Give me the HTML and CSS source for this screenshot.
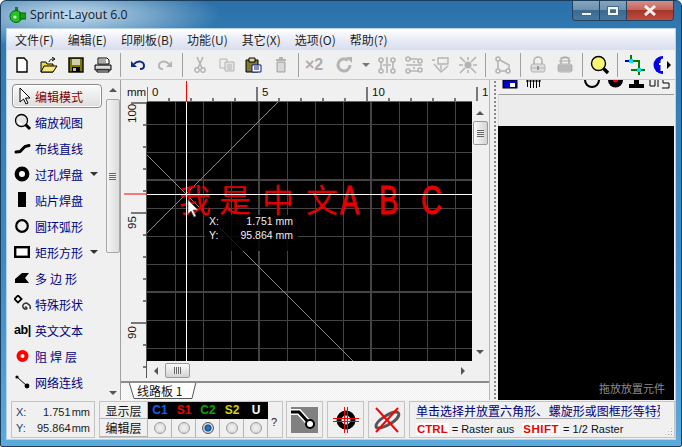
FILE: index.html
```html
<!DOCTYPE html>
<html lang="zh-CN">
<head>
    <meta charset="UTF-8">
    <title>Sprint-Layout 6.0</title>
    <link rel="stylesheet" href="styles.css">
</head>
<body>
<div class="window">
    <div class="titlebar">
        <svg class="app-icon" width="17" height="16" viewBox="0 0 17 16">
            <rect x="6" y="0" width="3" height="5" fill="#1c7a1c"/>
            <circle cx="7" cy="9.500" r="6" fill="#22c422" stroke="#0b5c0b"/>
            <rect x="11" y="6" width="6" height="6" fill="#17a017" stroke="#0b5c0b"/>
            <circle cx="6" cy="10" r="1.600" fill="#d8f8d8"/>
        </svg>
        <span class="title-text">Sprint-Layout 6.0</span>
        <div class="win-btns">
            <div class="win-btn"><span class="min-glyph"></span></div>
            <div class="win-btn win-max"><span class="max-glyph"></span></div>
            <div class="win-btn win-close">
                <svg width="14" height="11" viewBox="0 0 14 11"><path d="M2 1l10 9M12 1L2 10" stroke="#f4f0ee" stroke-width="3"/></svg>
            </div>
        </div>
    </div>

    <div class="client">
        <div class="menubar">
            <span>文件(F)</span><span>编辑(E)</span><span>印刷板(B)</span><span>功能(U)</span><span>其它(X)</span><span>选项(O)</span><span>帮助(?)</span>
        </div>

        <div class="toolbar">
            <div class="tb"><svg width="16" height="18" viewBox="0 0 16 18"><path d="M3 2h7l3 3v11H3z" fill="#fff" stroke="#000" stroke-width="1.400"/></svg></div>
            <div class="tb"><svg width="18" height="16" viewBox="0 0 18 16"><path d="M1 15V5h5l1 2h6v8z" fill="#e8d84c" stroke="#000"/><path d="M1 15l3-6h13l-4 6z" fill="#f4e878" stroke="#000"/><path d="M9 5c1-3 3-3 5-3M12 0l3 2-3 2" fill="none" stroke="#000"/></svg></div>
            <div class="tb"><svg width="16" height="16" viewBox="0 0 16 16"><rect x="1" y="1" width="14" height="14" fill="#7a7a00" stroke="#000" stroke-width="1.400"/><rect x="4" y="2" width="8" height="6" fill="#d0d0b0"/><rect x="4" y="10" width="8" height="5" fill="#000"/><rect x="5" y="11" width="3" height="3" fill="#bbb"/></svg></div>
            <div class="tb"><svg width="18" height="16" viewBox="0 0 18 16"><path d="M4 7V1h9l2 2v4z" fill="#fff" stroke="#000"/><path d="M5 3h7M5 5h7" stroke="#555"/><path d="M1 8h16v5H1z" fill="#bbb" stroke="#000"/><path d="M3 13h12v2H3z" fill="#eee" stroke="#000"/><path d="M2 10h14" stroke="#fff"/></svg></div>
            <div class="tb-sep"></div>
            <div class="tb"><svg width="16" height="12" viewBox="0 0 16 12"><path d="M4 5c4-4 10-3 10 2 0 2-2 3-4 3" fill="none" stroke="#0a2a8a" stroke-width="2"/><path d="M1 2v6h6z" fill="#0a2a8a"/></svg></div>
            <div class="tb"><svg width="16" height="12" viewBox="0 0 16 12"><path d="M12 5C8 1 2 2 2 7c0 2 2 3 4 3" fill="none" stroke="#b4b4b4" stroke-width="2"/><path d="M15 2v6H9z" fill="#b4b4b4"/></svg></div>
            <div class="tb-sep"></div>
            <div class="tb"><svg width="12" height="18" viewBox="0 0 12 18"><path d="M3 1l5 11M9 1L4 12" stroke="#b4b4b4" stroke-width="1.600"/><circle cx="3" cy="14" r="2.200" fill="none" stroke="#b4b4b4" stroke-width="1.400"/><circle cx="9" cy="14" r="2.200" fill="none" stroke="#b4b4b4" stroke-width="1.400"/></svg></div>
            <div class="tb"><svg width="16" height="14" viewBox="0 0 16 14"><path d="M1 1h7v9H1z" fill="#eee" stroke="#b4b4b4"/><path d="M6 4h9v9H6z" fill="#e4e4e4" stroke="#b4b4b4"/><path d="M8 7h5M8 9h5M8 11h5" stroke="#b4b4b4"/></svg></div>
            <div class="tb"><svg width="17" height="16" viewBox="0 0 17 16"><path d="M1 3h12v12H1z" fill="#807830" stroke="#000"/><path d="M4 1h6v4H4z" fill="#d8d8a0" stroke="#000"/><path d="M7 8h9v7H7z" fill="#fff" stroke="#0a1a8a"/><path d="M9 10h5M9 12h5" stroke="#0a1a8a"/></svg></div>
            <div class="tb"><svg width="12" height="16" viewBox="0 0 12 16"><path d="M1 3h10M4 1h4" stroke="#b4b4b4" stroke-width="2"/><path d="M2 5h8v10H2z" fill="#c4c4c4" stroke="#a8a8a8"/><path d="M4 6v8M6 6v8M8 6v8" stroke="#eee"/></svg></div>
            <div class="tb-sep"></div>
            <div class="tb tb-x2">×2</div>
            <div class="tb-rotate">
                <svg width="18" height="18" viewBox="0 0 18 18"><path d="M15 9a6 6 0 1 1-2-4.500" fill="none" stroke="#b4b4b4" stroke-width="3"/><path d="M11 1h6v6z" fill="#b4b4b4"/></svg>
                <span class="drop-gray"></span>
            </div>
            <div class="tb"><svg width="18" height="18" viewBox="0 0 18 18"><g fill="none" stroke="#b4b4b4" stroke-width="1.600"><circle cx="3" cy="4" r="2"/><circle cx="3" cy="15" r="2"/><circle cx="15" cy="4" r="2"/><circle cx="15" cy="15" r="2"/><path d="M3 6v7M15 6v7M9 1v16"/><path d="M5 9h3M10 9h3"/></g></svg></div>
            <div class="tb"><svg width="18" height="18" viewBox="0 0 18 18"><g fill="none" stroke="#b4b4b4" stroke-width="1.600"><circle cx="3" cy="3" r="2"/><circle cx="15" cy="5" r="2"/><circle cx="3" cy="15" r="2"/><circle cx="15" cy="14" r="2"/><path d="M5 3h8M5 15h8M1 9h16M9 5v2M9 11v2"/></g></svg></div>
            <div class="tb"><svg width="20" height="18" viewBox="0 0 20 18"><g fill="none" stroke="#b4b4b4" stroke-width="1.400"><path d="M7 2h10v6H7zM1 4h3M3 8l7 8 7-6"/><path d="M10 9v5"/></g></svg></div>
            <div class="tb"><svg width="20" height="18" viewBox="0 0 20 18"><circle cx="10" cy="9" r="3.500" fill="#b4b4b4"/><path d="M2 1l5 5M18 1l-5 5M2 17l5-5M18 17l-5-5M1 9h4M15 9h4M10 1v3M10 14v3" stroke="#b4b4b4" stroke-width="1.600"/></svg></div>
            <div class="tb-sep"></div>
            <div class="tb"><svg width="16" height="18" viewBox="0 0 16 18"><g fill="none" stroke="#b4b4b4" stroke-width="1.600"><circle cx="3" cy="3" r="2"/><circle cx="3" cy="15" r="2"/><circle cx="13" cy="15" r="2"/><path d="M5 4l9 5v4M5 15h6M3 5v8"/></g></svg></div>
            <div class="tb-sep"></div>
            <div class="tb"><svg width="16" height="18" viewBox="0 0 16 18"><path d="M4 8V5a4 4 0 0 1 8 0v3" fill="none" stroke="#b4b4b4" stroke-width="1.600"/><rect x="1" y="8" width="14" height="8" rx="2" fill="#ddd" stroke="#b4b4b4"/><path d="M1 12h14" stroke="#b4b4b4"/><path d="M8 10v4" stroke="#999" stroke-width="2"/></svg></div>
            <div class="tb"><svg width="16" height="18" viewBox="0 0 16 18"><path d="M4 8V5a4 4 0 0 1 8 0v3" fill="none" stroke="#b4b4b4" stroke-width="1.600"/><rect x="1" y="8" width="14" height="8" rx="2" fill="#ccc" stroke="#b4b4b4"/><path d="M1 10h14M1 12h14M1 14h14M3 2h10M2 5h12" stroke="#a8a8a8"/></svg></div>
            <div class="tb-sep"></div>
            <div class="tb"><svg width="20" height="20" viewBox="0 0 20 20"><path d="M12 12l6 6" stroke="#000" stroke-width="3.400"/><circle cx="8.500" cy="8.500" r="7" fill="#f8f870" stroke="#000" stroke-width="1.400"/></svg></div>
            <div class="tb-sep"></div>
            <div class="tb"><svg width="20" height="20" viewBox="0 0 20 20"><path d="M6 0V6H14V20M6 15H20" fill="none" stroke="#008000" stroke-width="2"/><path d="M0 6H6" stroke="#0000c0" stroke-width="2"/><rect x="4" y="4" width="4" height="4" fill="#00e0f0"/><rect x="12" y="13" width="4" height="4" fill="#00e0f0"/></svg></div>
            <div class="tb tb-clip"><svg width="20" height="18" viewBox="0 0 20 18"><circle cx="9.500" cy="9" r="9" fill="#0000f0"/><path d="M6 7h1.500V5c0-2 2-3 4-2.500v2H10v2.500h1.500v2H10v6H7.500v-6H6z" fill="#fff"/></svg></div>
            <div class="tb-more"><span class="more-arrow"></span></div>
        </div>

        <div class="main">
            <div class="tools">
                <div class="tool tool-active">
                    <svg class="tool-ic" width="18" height="18" viewBox="0 0 18 18"><path d="M6 1v14l3.500-3 2.500 5 2-1-2.500-5H16z" fill="#fff" stroke="#000"/></svg>
                    <span class="tool-red">编辑模式</span>
                </div>
                <div class="tool">
                    <svg class="tool-ic" width="18" height="18" viewBox="0 0 18 18"><path d="M11 11l5 5" stroke="#000" stroke-width="3"/><circle cx="7.500" cy="7.500" r="6" fill="#e4e4e4" stroke="#000" stroke-width="1.300"/><path d="M4 8a4 4 0 0 0 4 3" fill="none" stroke="#fff" stroke-width="2"/></svg>
                    <span>缩放视图</span>
                </div>
                <div class="tool">
                    <svg class="tool-ic" width="18" height="18" viewBox="0 0 18 18"><path d="M2 13l4-.5 5-5 4-1" fill="none" stroke="#000" stroke-width="3" stroke-linecap="round"/></svg>
                    <span>布线直线</span>
                </div>
                <div class="tool">
                    <svg class="tool-ic" width="18" height="18" viewBox="0 0 18 18"><circle cx="8" cy="9" r="5.200" fill="#fff" stroke="#000" stroke-width="4.400"/></svg>
                    <span>过孔焊盘</span><span class="drop"></span>
                </div>
                <div class="tool">
                    <svg class="tool-ic" width="18" height="18" viewBox="0 0 18 18"><rect x="4" y="1" width="8" height="15" fill="#000"/></svg>
                    <span>贴片焊盘</span>
                </div>
                <div class="tool">
                    <svg class="tool-ic" width="18" height="18" viewBox="0 0 18 18"><circle cx="8" cy="9" r="5.800" fill="none" stroke="#000" stroke-width="2.200"/></svg>
                    <span>圆环弧形</span>
                </div>
                <div class="tool">
                    <svg class="tool-ic" width="18" height="18" viewBox="0 0 18 18"><rect x="1.200" y="4.200" width="13.600" height="9.600" fill="#fff" stroke="#000" stroke-width="2.400"/></svg>
                    <span>矩形方形</span><span class="drop"></span>
                </div>
                <div class="tool">
                    <svg class="tool-ic" width="18" height="18" viewBox="0 0 18 18"><path d="M1 14V10L8 4H15L11 9L15 14Z" fill="#000"/></svg>
                    <span class="spaced">多边形</span>
                </div>
                <div class="tool">
                    <svg class="tool-ic" width="18" height="18" viewBox="0 0 18 18"><rect x="1.500" y="1.500" width="5" height="5" transform="rotate(45 4 4)" fill="#fff" stroke="#000" stroke-width="1.800"/><path d="M11 12.500a1 1 0 1 1 1.500 1.500 3 3 0 1 1 1.500-5 4 4 0 0 1 2 5" fill="none" stroke="#333" stroke-width="1.500"/></svg>
                    <span>特殊形状</span>
                </div>
                <div class="tool">
                    <span class="tool-ab">ab|</span>
                    <span>英文文本</span>
                </div>
                <div class="tool">
                    <svg class="tool-ic" width="18" height="18" viewBox="0 0 18 18"><circle cx="8.500" cy="9" r="4" fill="#fff" stroke="#f00" stroke-width="4"/></svg>
                    <span class="spaced">阻焊层</span>
                </div>
                <div class="tool">
                    <svg class="tool-ic" width="18" height="18" viewBox="0 0 18 18"><path d="M3 4l10 9" stroke="#000"/><circle cx="3" cy="4" r="1.600" fill="#000"/><circle cx="13" cy="13" r="2.400" fill="#000"/></svg>
                    <span>网络连线</span>
                </div>
            </div>

            <div class="tools-scroll">
                <span class="arr-up"></span>
                <div class="tools-thumb"><span class="grip"></span></div>
                <span class="arr-down"></span>
            </div>

            <div class="board">
                <div class="board-row">
                    <svg class="ruler-left" width="26" height="298" viewBox="121 80 26 298">
                        <text x="127" y="96" class="rt">mm</text>
                        <path d="M131 103H147M131 213H147M131 323H147M143 125H147M143 147H147M143 169H147M143 191H147M143 235H147M143 257H147M143 279H147M143 301H147M143 345H147M143 367H147" stroke="#000"/>
                        <path d="M146.500 102V378" stroke="#555"/>
                        <path d="M124 194H147" stroke="#f00"/>
                        <text class="rt" transform="translate(136 123) rotate(-90)">100</text>
                        <text class="rt" transform="translate(136 229) rotate(-90)">95</text>
                        <text class="rt" transform="translate(136 339) rotate(-90)">90</text>
                    </svg>
                    <div class="board-right">
                        <svg class="ruler-top" width="341" height="22" viewBox="147 80 341 22">
                            <path d="M147 87V101M257 87V101M367 87V101M477 87V101M169 98V101M191 98V101M213 98V101M235 98V101M279 98V101M301 98V101M323 98V101M345 98V101M389 98V101M411 98V101M433 98V101M455 98V101" stroke="#000"/>
                            <path d="M186.500 81V101" stroke="#f00"/>
                            <path d="M147 101.500H472" stroke="#666"/>
                            <text x="152" y="96" class="rt">0</text>
                            <text x="262" y="96" class="rt">5</text>
                            <text x="372" y="96" class="rt">10</text>
                            <text x="482" y="96" class="rt">1</text>
                        </svg>
                        <div class="view-row">
                            <svg class="canvas" width="325" height="259" viewBox="147 102 325 259">
                                <rect x="147" y="102" width="325" height="259" fill="#000"/>
                                <path d="M175.500 102V361M203.500 102V361M231.500 102V361M287.500 102V361M315.500 102V361M343.500 102V361M399.500 102V361M427.500 102V361M455.500 102V361M147 124.500H472M147 152.500H472M147 208.500H472M147 236.500H472M147 264.500H472M147 320.500H472M147 348.500H472" stroke="#444"/>
                                <path d="M259 102V361M371 102V361M147 180H472M147 292H472" stroke="#444" stroke-width="2"/>
                                <path d="M147 233L278 102M147 155L353 361" stroke="#8a8a8a" fill="none"/>
                                <rect x="205" y="215" width="93" height="36" fill="#000" opacity=".82"/>
                                <g class="red-text">
                                    <text x="179" y="212">我</text>
                                    <text x="219" y="212">是</text>
                                    <text x="262" y="212">中</text>
                                    <text x="306" y="212">文</text>
                                </g>
                                <g class="red-latin">
                                    <text transform="translate(340 214) scale(.72 1)">A</text>
                                    <text transform="translate(379 214) scale(.72 1)">B</text>
                                    <text transform="translate(421 214) scale(.72 1)">C</text>
                                </g>
                                <path d="M186.500 102V361M147 194.500H472" stroke="#fff"/>
                                <g class="tip">
                                    <text x="209" y="225">X:</text>
                                    <text x="293" y="225" text-anchor="end">1.751 mm</text>
                                    <text x="209" y="239">Y:</text>
                                    <text x="293" y="239" text-anchor="end">95.864 mm</text>
                                </g>
                                <path d="M188 200v14l3-3 3 6 2-1-3-6h5z" fill="#fff" stroke="#555" stroke-width=".6"/>
                            </svg>
                            <div class="vbar">
                                <span class="arr-up"></span>
                                <div class="vthumb"><span class="grip"></span></div>
                                <span class="arr-down"></span>
                            </div>
                        </div>
                        <div class="hbar">
                            <span class="arr-left"></span>
                            <div class="hthumb"><span class="vgrip"></span></div>
                            <span class="arr-right"></span>
                        </div>
                    </div>
                </div>
                <div class="tabs">
                    <div class="tab">
                        <svg class="tab-shape" width="68" height="16" viewBox="0 0 68 16"><path d="M0 -1L5 15.500H63L67 -1Z" fill="#fff" stroke="#555"/></svg>
                        <span class="tab-label">线路板 1</span>
                    </div>
                </div>
            </div>

            <div class="splitter"></div>

            <div class="parts">
                <div class="parts-icons">
                    <svg width="176" height="14" viewBox="498 80 176 14">
                        <rect x="503" y="80" width="14" height="8" fill="#0000d0" stroke="#000"/>
                        <rect x="510" y="83" width="5" height="4" fill="#fff"/>
                        <path d="M527.500 80v7M530.500 80v8M533.500 80v8M536.500 80v8M539.500 80v7M526 81h15" stroke="#000"/>
                        <path d="M585 80a7 7 0 0 0 14 0" fill="none" stroke="#000" stroke-width="2"/>
                        <path d="M608 80a7.500 7.500 0 0 0 15 0z" fill="#000"/>
                        <circle cx="615.500" cy="80" r="2.500" fill="#f00"/>
                        <path d="M634 80h5v4h5v4h-15v-4h5z" fill="#000"/>
                        <path d="M650 80v6h5v-6M658 80v7M663 80v3h6v5h-7" fill="none" stroke="#000"/>
                    </svg>
                </div>
                <div class="parts-head"></div>
                <div class="parts-list">
                    <span class="parts-hint">拖放放置元件</span>
                </div>
            </div>
        </div>

        <div class="status">
            <div class="coords">
                <div class="coord-row"><span class="coord-key">X:</span><span class="coord-val">1.751 mm</span></div>
                <div class="coord-row"><span class="coord-key">Y:</span><span class="coord-val">95.864 mm</span></div>
            </div>
            <div class="layers">
                <div class="layer-name">显示层</div>
                <div class="layer-code c1">C1</div>
                <div class="layer-code s1">S1</div>
                <div class="layer-code c2">C2</div>
                <div class="layer-code s2">S2</div>
                <div class="layer-code u">U</div>
                <div class="layer-help">?</div>
                <div class="layer-name">编辑层</div>
                <div class="layer-radio"><span class="radio"></span></div>
                <div class="layer-radio"><span class="radio"></span></div>
                <div class="layer-radio"><span class="radio radio-on"></span></div>
                <div class="layer-radio"><span class="radio"></span></div>
                <div class="layer-radio"><span class="radio"></span></div>
            </div>
            <div class="sbtn">
                <svg width="27" height="26" viewBox="0 0 27 26"><rect width="27" height="26" fill="#808080"/><path d="M0 5h8l9 10" fill="none" stroke="#fff" stroke-width="6"/><path d="M0 5h8l9 10" fill="none" stroke="#000" stroke-width="3"/><circle cx="19" cy="17" r="4" fill="#fff" stroke="#000" stroke-width="2"/></svg>
            </div>
            <div class="sbtn">
                <svg width="28" height="28" viewBox="0 0 28 28"><circle cx="14" cy="14" r="7" fill="none" stroke="#000" stroke-width="5"/><path d="M1 12.500h26M1 15.500h26M12.500 1v26M15.500 1v26" stroke="#f00"/></svg>
            </div>
            <div class="sbtn">
                <svg width="30" height="28" viewBox="0 0 30 28"><path d="M4 20c0-5 14-14 20-14 5 0 3 6-3 10-6 4-17 9-17 4z" fill="none" stroke="#555" stroke-width="3"/><path d="M4 2l22 24M26 2L4 26" stroke="#f00" stroke-width="2"/></svg>
            </div>
            <div class="hint">
                <div class="hint-top">单击选择并放置六角形、&#8202;螺旋形或图框形等特殊</div>
                <div class="hint-keys">
                    <span class="key">CTRL</span><span class="key-text">= Raster aus</span>
                    <span class="key key-shift">SHIFT</span><span class="key-text">= 1/2 Raster</span>
                </div>
                <span class="size-grip"></span>
            </div>
        </div>
    </div>
</div>
</body>
</html>
```

FILE: styles.css
```css
* {
    box-sizing: border-box;
}
body {
    margin: 0;
    background: #fff;
    font-family: "Noto Sans CJK SC", "Liberation Sans", sans-serif;
    font-size: 12px;
    overflow: hidden;
}
svg {
    display: block;
    flex: none;
}
.window {
    width: 682px;
    height: 447px;
    border: 1px solid #1b3d5c;
    border-radius: 6px 6px 2px 2px;
    background:
        radial-gradient(ellipse 150px 34px at 70px 14px, rgba(225, 238, 246, .85), rgba(225, 238, 246, 0) 100%),
        linear-gradient(180deg, #2b70a8 0, #3079b1 30px, #3d8cc6 60%, #5ca9dc 100%);
    padding: 0 6px 7px 6px;
    display: flex;
    flex-direction: column;
}
.titlebar {
    height: 28px;
    display: flex;
    align-items: center;
    position: relative;
}
.app-icon {
    margin-left: 2px;
}
.title-text {
    font-family: "Open Sans", sans-serif;
    font-size: 12.300px;
    color: #10202c;
    margin-left: 4px;
    margin-top: -1px;
}
.win-btns {
    position: absolute;
    top: 0;
    right: 1px;
    display: flex;
    height: 20px;
    border: 1px solid #24425f;
    border-top: none;
    border-radius: 0 0 4px 4px;
    overflow: hidden;
}
.win-btn {
    width: 27px;
    height: 19px;
    background: linear-gradient(180deg, #86a5bd 0, #6c93b0 45%, #3c6a8f 50%, #47789e 100%);
    border-right: 1px solid #24425f;
    display: flex;
    align-items: center;
    justify-content: center;
}
.win-close {
    width: 46px;
    border-right: none;
    background: linear-gradient(180deg, #d48f86 0, #c4655a 45%, #a8352a 50%, #bd4c3e 100%);
}
.min-glyph {
    width: 11px;
    height: 4px;
    margin-top: 6px;
    background: #f4f6f8;
    border: 1px solid #47688a;
}
.max-glyph {
    width: 10px;
    height: 8px;
    border: 2px solid #f4f6f8;
    outline: 1px solid #47688a;
}
.client {
    flex: 1;
    background: #f0f0f0;
    display: flex;
    flex-direction: column;
    outline: 1px solid #b9d3e6;
    min-height: 0;
}
.menubar {
    height: 21px;
    background: linear-gradient(180deg, #fff 0, #eef0f8 40%, #d8deef 100%);
    display: flex;
    align-items: center;
    gap: 14px;
    padding-left: 8px;
    color: #1e1e1e;
}
.toolbar {
    height: 30px;
    background: #f0f0f0;
    display: flex;
    align-items: center;
    padding-left: 1px;
    border-bottom: 1px solid #c8c8c8;
    overflow: hidden;
}
.tb {
    width: 27px;
    height: 28px;
    flex: none;
    display: flex;
    align-items: center;
    justify-content: center;
}
.tb-sep {
    width: 8px;
    height: 24px;
    flex: none;
    background: linear-gradient(#a0a0a0, #a0a0a0) center / 1px 100% no-repeat;
}
.tb-x2 {
    font-family: "Liberation Sans", sans-serif;
    font-weight: bold;
    font-size: 16px;
    color: #adadad;
    padding-right: 3px;
}
.tb-rotate {
    width: 44px;
    flex: none;
    display: flex;
    align-items: center;
    padding-left: 6px;
    gap: 9px;
}
.drop-gray {
    width: 0;
    height: 0;
    border-left: 4px solid transparent;
    border-right: 4px solid transparent;
    border-top: 4px solid #777;
}
.tb-clip {
    overflow: hidden;
    width: 15px;
    justify-content: flex-start;
    padding-left: 5px;
}
.tb-more {
    flex: none;
    width: 12px;
    height: 30px;
    background: #f4f4f4;
    display: flex;
    align-items: center;
    justify-content: center;
}
.more-arrow {
    width: 0;
    height: 0;
    border-top: 4px solid transparent;
    border-bottom: 4px solid transparent;
    border-left: 4px solid #000;
}
.main {
    height: 320px;
    display: flex;
}
.tools {
    width: 98px;
    flex: none;
    padding: 4px 0 0 5px;
}
.tool {
    width: 90px;
    height: 24px;
    margin-bottom: 2px;
    padding-left: 2px;
    display: flex;
    align-items: center;
    gap: 3px;
    color: #00007f;
    position: relative;
    white-space: nowrap;
}
.tool-active {
    border: 1px solid #8c8c8c;
    border-radius: 4px;
    padding-left: 1px;
    background: linear-gradient(180deg, #fafafa 0, #ececec 50%, #dedede 100%);
    box-shadow: inset 0 0 0 1px #fff;
}
.tool-red {
    color: #800000;
}
.tool-ab {
    width: 18px;
    flex: none;
    font-family: "Liberation Sans", sans-serif;
    font-weight: bold;
    color: #000;
    font-size: 12.500px;
    white-space: nowrap;
    letter-spacing: -.4px;
}
.spaced {
    letter-spacing: 3px;
}
.drop {
    position: absolute;
    right: 4px;
    top: 10px;
    border-left: 4px solid transparent;
    border-right: 4px solid transparent;
    border-top: 4px solid #333;
}
.tools-scroll {
    width: 16px;
    flex: none;
    display: flex;
    flex-direction: column;
    align-items: center;
    padding-top: 8px;
    border-right: 1px solid #a0a0a0;
}
.tools-thumb {
    width: 14px;
    height: 154px;
    margin-top: 7px;
    border: 1px solid #a8a8a8;
    border-radius: 2px;
    background: linear-gradient(90deg, #f4f4f4, #dcdcdc);
    display: flex;
    align-items: center;
    justify-content: center;
}
.tools-scroll .arr-down {
    margin-top: auto;
    margin-bottom: 5px;
}
.arr-up {
    flex: none;
    border-left: 4px solid transparent;
    border-right: 4px solid transparent;
    border-bottom: 4px solid #555;
}
.arr-down {
    flex: none;
    border-left: 4px solid transparent;
    border-right: 4px solid transparent;
    border-top: 4px solid #555;
}
.arr-left {
    border-top: 4px solid transparent;
    border-bottom: 4px solid transparent;
    border-right: 4px solid #555;
}
.arr-right {
    border-top: 4px solid transparent;
    border-bottom: 4px solid transparent;
    border-left: 4px solid #555;
    margin-left: auto;
}
.grip {
    width: 7px;
    height: 7px;
    background: repeating-linear-gradient(180deg, #666 0, #666 1px, #eee 1px, #eee 2px);
}
.vgrip {
    width: 7px;
    height: 7px;
    background: repeating-linear-gradient(90deg, #666 0, #666 1px, #eee 1px, #eee 2px);
}
.board {
    width: 368px;
    flex: none;
    display: flex;
    flex-direction: column;
}
.board-row {
    height: 298px;
    display: flex;
    flex: none;
}
.board-right {
    width: 341px;
    flex: none;
}
.rt {
    font-family: "Liberation Sans", sans-serif;
    font-size: 11.500px;
    fill: #111;
}
.view-row {
    display: flex;
}
.red-text text {
    font-family: "Noto Sans CJK SC", sans-serif;
    font-size: 32px;
    fill: #e00000;
}
.red-latin text {
    font-family: "Liberation Sans", sans-serif;
    font-size: 40px;
    fill: #e60000;
    stroke: #e60000;
    stroke-width: .8px;
}
.tip text {
    font-family: "Liberation Sans", sans-serif;
    font-size: 10.500px;
    fill: #f0f0f0;
    stroke: #000;
    stroke-width: 3px;
    paint-order: stroke;
}
.vbar {
    width: 16px;
    height: 259px;
    display: flex;
    flex-direction: column;
    align-items: center;
    padding-top: 9px;
    background: #f0f0f0;
}
.vthumb {
    width: 15px;
    height: 24px;
    margin-top: 6px;
    border: 1px solid #999;
    border-radius: 2px;
    background: linear-gradient(90deg, #fafafa, #d4d4d4);
    display: flex;
    align-items: center;
    justify-content: center;
}
.vbar .arr-down {
    margin-top: auto;
    margin-bottom: 7px;
}
.hbar {
    height: 17px;
    width: 325px;
    margin-top: 1px;
    padding: 0 7px;
    display: flex;
    align-items: center;
    background: #f0f0f0;
}
.hthumb {
    width: 25px;
    height: 15px;
    margin-left: 7px;
    border: 1px solid #999;
    border-radius: 2px;
    background: linear-gradient(180deg, #fafafa, #d4d4d4);
    display: flex;
    align-items: center;
    justify-content: center;
}
.tabs {
    flex: 1;
    border-top: 2px solid #8c8c8c;
    margin-top: 3px;
    background: repeating-conic-gradient(#fff 0 25%, #eeeeee 0 50%) 0 0 / 2px 2px;
    padding-left: 8px;
}
.tab {
    width: 68px;
    height: 16px;
    position: relative;
    line-height: 15px;
    padding-left: 8px;
    color: #111;
}
.tab-shape {
    position: absolute;
    left: 0;
    top: 0;
}
.tab-label {
    position: relative;
}
.splitter {
    width: 9px;
    flex: none;
    border-left: 1px solid #b8b8b8;
    background: radial-gradient(circle, #8a8a8a 40%, transparent 45%) 3px 0 / 4px 4px repeat-y;
}
.parts {
    width: 176px;
    flex: none;
    display: flex;
    flex-direction: column;
}
.parts-icons {
    height: 14px;
    overflow: hidden;
}
.parts-head {
    height: 32px;
    background: #ececec;
    border-top: 1px solid #9c9c9c;
    border-left: 1px solid #d8d8d8;
}
.parts-list {
    flex: 1;
    background: #000;
    display: flex;
    justify-content: flex-end;
    align-items: flex-end;
    padding: 0 9px 4px 0;
}
.parts-hint {
    font-size: 11px;
    color: #8c8c8c;
}
.status {
    height: 39px;
    flex: none;
    display: flex;
    padding: 1px 0 1px 4px;
    gap: 4px;
    font-family: "Liberation Sans", "Noto Sans CJK SC", sans-serif;
}
.coords {
    width: 84px;
    flex: none;
    border: 1px solid #c4c4c4;
    padding: 2px 4px 0 4px;
    font-size: 11px;
    color: #222;
}
.coord-row {
    display: flex;
    justify-content: space-between;
    height: 16px;
    line-height: 16px;
}
.coord-key {
    color: #23406e;
}
.coord-val {
    word-spacing: -2px;
}
.layers {
    width: 184px;
    flex: none;
    display: grid;
    grid-template-columns: 48px repeat(5, 24px) 16px;
    grid-template-rows: 17px 18px;
    border: 1px solid #c4c4c4;
    margin-right: -1px;
}
.layer-name {
    font-family: "Noto Sans CJK SC", sans-serif;
    font-size: 12px;
    color: #111;
    text-align: center;
    line-height: 17px;
    border-bottom: 1px solid #b4b4b4;
    border-right: 1px solid #b4b4b4;
}
.layer-code {
    background: #000;
    text-align: center;
    font-weight: bold;
    font-size: 12px;
    line-height: 17px;
}
.c1 { color: #0f5cff; }
.s1 { color: #f00000; }
.c2 { color: #00a800; }
.s2 { color: #d4d400; }
.u { color: #fff; }
.layer-help {
    grid-row: 1 / 3;
    grid-column: 7;
    align-self: center;
    text-align: center;
    font-size: 11px;
    color: #222;
    padding: 4px 4px 0 0;
}
.layer-radio {
    border-right: 1px solid #b4b4b4;
    display: flex;
    align-items: center;
    justify-content: center;
}
.radio {
    width: 12px;
    height: 12px;
    border-radius: 50%;
    border: 1px solid #9c9c9c;
    background: radial-gradient(circle, #f4f4f4 0, #dcdcdc 70%);
}
.radio-on {
    background: radial-gradient(circle, #2a8fd8 0, #0b4f90 45%, #d4d4d4 55%);
    border-color: #555;
}
.sbtn {
    width: 37px;
    flex: none;
    border: 1px solid #c4c4c4;
    display: flex;
    align-items: center;
    justify-content: center;
}
.hint {
    flex: 1;
    min-width: 0;
    border: 1px solid #c4c4c4;
    padding: 0 14px 0 6px;
    position: relative;
    overflow: hidden;
}
.hint-top {
    font-family: "Noto Sans CJK SC", sans-serif;
    font-size: 12px;
    color: #00007f;
    white-space: nowrap;
    overflow: hidden;
    height: 17px;
    line-height: 17px;
    border-bottom: 1px solid #a8a8a8;
}
.hint-keys {
    display: flex;
    align-items: center;
    height: 19px;
    font-size: 11px;
    color: #111;
}
.key {
    background: #fff;
    color: #f00000;
    font-weight: bold;
    font-size: 11.500px;
    padding: 0 1px;
    margin-right: 3px;
}
.key-shift {
    margin-left: 8px;
    letter-spacing: .5px;
}
.size-grip {
    position: absolute;
    right: 1px;
    bottom: 1px;
    width: 9px;
    height: 9px;
    background: radial-gradient(circle, #a0a0a0 40%, transparent 45%) 0 0 / 3px 3px;
    clip-path: polygon(100% 0, 100% 100%, 0 100%);
}
```
